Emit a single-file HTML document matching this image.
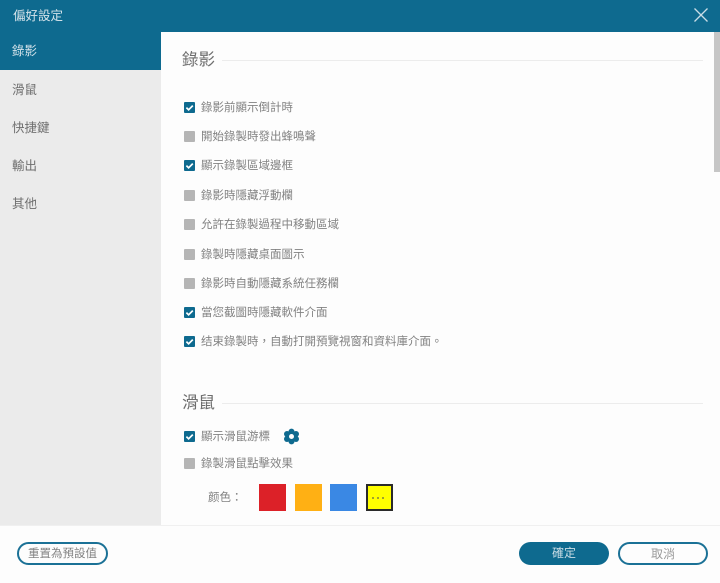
<!DOCTYPE html>
<html><head><meta charset="utf-8">
<style>
html,body{margin:0;padding:0}
body{width:720px;height:583px;position:relative;overflow:hidden;background:#fdfdfd;font-family:"Liberation Sans","Noto Sans CJK TC",sans-serif;color:#828282;font-size:11.5px}
div,span{position:absolute;white-space:nowrap}
#w{left:0;top:0;width:720px;height:583px;filter:blur(0.3px)}
.t{line-height:16px;font-weight:400}
.cb{left:184px;width:11px;height:11px;background:#b5b5b5;border-radius:1px}
.cb.on{background:#0e6a8f}
.cb svg{position:absolute;left:0;top:0}
.side{left:12px;font-size:12.5px;color:#6e6e6e;line-height:18px}
.l{left:201px}
</style></head><body><div id="w">
<div style="left:0;top:0;width:720px;height:32px;background:#0e6a8f"></div>
<div class="t" style="left:13px;top:7px;font-size:12.5px;line-height:18px;color:#d4e3ea">偏好設定</div>
<svg style="position:absolute;left:692px;top:6px" width="18" height="18" viewBox="0 0 18 18"><path d="M2.5 2.5L15.5 15.5M15.5 2.5L2.5 15.5" stroke="#c9dde6" stroke-width="1.3" fill="none"/></svg>

<div style="left:0;top:32px;width:161px;height:493px;background:#ebebeb"></div>
<div style="left:0;top:32px;width:161px;height:38px;background:#0e6a8f"></div>
<div class="side" style="top:42px;color:#d4e3ea">錄影</div>
<div class="side" style="top:81px">滑鼠</div>
<div class="side" style="top:119px">快捷鍵</div>
<div class="side" style="top:157px">輸出</div>
<div class="side" style="top:195px">其他</div>

<div style="left:714px;top:32px;width:6px;height:140px;background:#c6c6c6"></div>

<div class="t" style="left:182px;top:49px;font-size:16.5px;line-height:22px;color:#6e6e6e">錄影</div>
<div style="left:222px;top:60px;width:481px;height:1px;background:#ececec"></div>

<div class="cb on" style="top:102px"><svg width="11" height="11" viewBox="0 0 11 11"><path d="M2.4 5.6L4.6 7.8L8.8 3.6" stroke="#fff" stroke-width="1.7" fill="none"/></svg></div>
<div class="t l" style="top:100px">錄影前顯示倒計時</div>
<div class="cb" style="top:131px"></div>
<div class="t l" style="top:129px">開始錄製時發出蜂鳴聲</div>
<div class="cb on" style="top:160px"><svg width="11" height="11" viewBox="0 0 11 11"><path d="M2.4 5.6L4.6 7.8L8.8 3.6" stroke="#fff" stroke-width="1.7" fill="none"/></svg></div>
<div class="t l" style="top:158px">顯示錄製區域邊框</div>
<div class="cb" style="top:190px"></div>
<div class="t l" style="top:188px">錄影時隱藏浮動欄</div>
<div class="cb" style="top:219px"></div>
<div class="t l" style="top:217px">允許在錄製過程中移動區域</div>
<div class="cb" style="top:249px"></div>
<div class="t l" style="top:247px">錄製時隱藏桌面圖示</div>
<div class="cb" style="top:278px"></div>
<div class="t l" style="top:276px">錄影時自動隱藏系統任務欄</div>
<div class="cb on" style="top:307px"><svg width="11" height="11" viewBox="0 0 11 11"><path d="M2.4 5.6L4.6 7.8L8.8 3.6" stroke="#fff" stroke-width="1.7" fill="none"/></svg></div>
<div class="t l" style="top:305px">當您截圖時隱藏軟件介面</div>
<div class="cb on" style="top:336px"><svg width="11" height="11" viewBox="0 0 11 11"><path d="M2.4 5.6L4.6 7.8L8.8 3.6" stroke="#fff" stroke-width="1.7" fill="none"/></svg></div>
<div class="t l" style="top:334px">结束錄製時，自動打開預覽視窗和資料庫介面。</div>

<div class="t" style="left:182px;top:392px;font-size:16.5px;line-height:22px;color:#6e6e6e">滑鼠</div>
<div style="left:222px;top:403px;width:481px;height:1px;background:#ececec"></div>

<div class="cb on" style="top:431px"><svg width="11" height="11" viewBox="0 0 11 11"><path d="M2.4 5.6L4.6 7.8L8.8 3.6" stroke="#fff" stroke-width="1.7" fill="none"/></svg></div>
<div class="t l" style="top:429px">顯示滑鼠游標</div>
<svg style="position:absolute;left:283px;top:428px" width="17" height="17" viewBox="0 0 17 17"><g fill="#0e6a8f"><circle cx="8.5" cy="3.6" r="3"/><circle cx="8.5" cy="13.4" r="3"/><circle cx="4" cy="6" r="3"/><circle cx="13" cy="6" r="3"/><circle cx="4" cy="11" r="3"/><circle cx="13" cy="11" r="3"/><circle cx="8.5" cy="8.5" r="5"/></g><circle cx="8.5" cy="8.5" r="2.5" fill="#fdfdfd"/></svg>
<div class="cb" style="top:458px"></div>
<div class="t l" style="top:456px">錄製滑鼠點擊效果</div>

<div class="t" style="left:208px;top:490px">颜色：</div>
<div style="left:259px;top:484px;width:27px;height:27px;background:#dc2128"></div>
<div style="left:295px;top:484px;width:27px;height:27px;background:#ffb014"></div>
<div style="left:330px;top:484px;width:27px;height:27px;background:#3a88e4"></div>
<div style="left:366px;top:484px;width:23px;height:23px;background:#ffff00;border:2px solid #2a2a2a"></div>
<div style="left:372px;top:497px;width:2px;height:2px;background:#a0a030"></div>
<div style="left:377px;top:497px;width:2px;height:2px;background:#a0a030"></div>
<div style="left:382px;top:497px;width:2px;height:2px;background:#a0a030"></div>

<div style="left:0;top:525px;width:720px;height:58px;background:#fdfdfd;border-top:1px solid #f0f0f0;box-sizing:border-box"></div>
<div class="t" style="left:17px;top:542px;width:91px;height:23px;box-sizing:border-box;border:2px solid #1b7196;border-radius:11.5px;text-align:center;line-height:20px">重置為預設值</div>
<div class="t" style="left:519px;top:542px;width:90px;height:23px;background:#0e6a8f;border-radius:11.5px;text-align:center;line-height:23px;color:#c9dde6;font-size:12px">確定</div>
<div class="t" style="left:618px;top:542px;width:90px;height:23px;box-sizing:border-box;border:2px solid #1b7196;border-radius:11.5px;text-align:center;line-height:20px;color:#999;font-size:12px">取消</div>
</div></body></html>
